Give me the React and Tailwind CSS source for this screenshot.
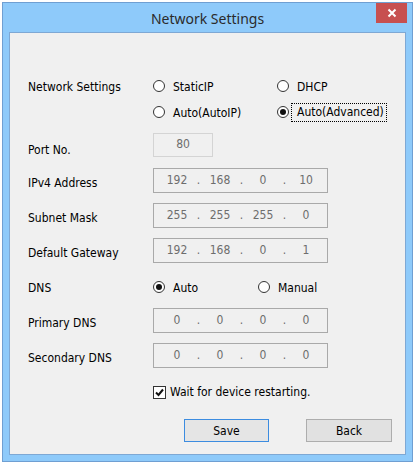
import React from 'react';

const FONT = "font-['DejaVu_Sans_Condensed','DejaVu_Sans',sans-serif]";

function Radio({ checked, label, focus, className = '' }) {
  return (
    <div className={`flex items-center ${className}`}>
      <span className="w-[12px] h-[12px] rounded-full border border-[#333] bg-white flex items-center justify-center shrink-0">
        {checked && <span className="w-[6px] h-[6px] rounded-full bg-[#111]" />}
      </span>
      {focus ? (
        <span className="ml-[2px] border border-dotted border-black pl-[5px] pr-[2px] leading-[17px]">{label}</span>
      ) : (
        <span className="ml-[8px] pt-[1px]">{label}</span>
      )}
    </div>
  );
}

function IpBox({ parts }) {
  return (
    <div className="w-[175px] h-[25px] border border-[#a9a9a9] flex items-center pl-[4px] pb-[2px] text-[#6d6d6d]">
      {parts.map((p, i) => (
        <React.Fragment key={i}>
          <span className="w-[38px] text-center">{p}</span>
          {i < 3 && <span className="w-[5px] text-center">.</span>}
        </React.Fragment>
      ))}
    </div>
  );
}

function Row({ label, labelClass = 'pt-[4px]', className = '', children }) {
  return (
    <div className={`flex items-center ${className}`}>
      <div className={`w-[125px] ${labelClass}`}>{label}</div>
      {children}
    </div>
  );
}

export default function App() {
  return (
    <div className="w-[416px] h-[465px] bg-white pt-[2px] pl-[2px]">
      <div className="w-[411px] h-[460px] border border-[#6f9fd2] bg-[#8ecafa] flex flex-col px-[6px] pb-[6px]">
        <div className="relative h-[29px] flex items-center justify-center shrink-0">
          <span className="font-['Noto_Sans',sans-serif] text-[14px] text-[#2b2b2b] pt-[1px]">Network Settings</span>
          <div className="absolute top-0 right-[-1px] w-[31px] h-[20px] bg-[#c75050] flex items-center justify-center">
            <svg width="10" height="10" viewBox="0 0 10 10">
              <path d="M1.5 1.5 L8.5 8.5 M8.5 1.5 L1.5 8.5" stroke="white" strokeWidth="2" />
            </svg>
          </div>
        </div>
        <div className={`flex-1 border border-[#7ea8d4] bg-[#f0f0f0] pl-[18px] pt-[43px] text-[12px] text-black ${FONT}`}>
          <Row label="Network Settings" labelClass="pt-[1px]" className="h-[20px]">
            <Radio label="StaticIP" className="w-[124px]" />
            <Radio label="DHCP" />
          </Row>
          <Row label="" labelClass="" className="h-[20px] mt-[6px]">
            <Radio label="Auto(AutoIP)" className="w-[124px]" />
            <Radio label="Auto(Advanced)" checked focus />
          </Row>
          <Row label="Port No." labelClass="pt-[10px]" className="h-[24px] mt-[11px]">
            <div className="w-[60px] h-[24px] border border-[#d4d4d4] flex items-center justify-center pb-[3px] text-[#6d6d6d]">80</div>
          </Row>
          <Row label="IPv4 Address" className="h-[25px] mt-[11px]">
            <IpBox parts={['192', '168', '0', '10']} />
          </Row>
          <Row label="Subnet Mask" className="h-[25px] mt-[10px]">
            <IpBox parts={['255', '255', '255', '0']} />
          </Row>
          <Row label="Default Gateway" className="h-[25px] mt-[10px]">
            <IpBox parts={['192', '168', '0', '1']} />
          </Row>
          <Row label="DNS" labelClass="pt-[1px]" className="h-[20px] mt-[14px]">
            <Radio label="Auto" checked className="w-[105px]" />
            <Radio label="Manual" />
          </Row>
          <Row label="Primary DNS" className="h-[25px] mt-[11px]">
            <IpBox parts={['0', '0', '0', '0']} />
          </Row>
          <Row label="Secondary DNS" className="h-[25px] mt-[10px]">
            <IpBox parts={['0', '0', '0', '0']} />
          </Row>
          <div className="flex items-center h-[16px] mt-[16px] pl-[125px]">
            <span className="w-[13px] h-[13px] border border-[#333] bg-white flex items-center justify-center shrink-0">
              <svg width="9" height="9" viewBox="0 0 9 9">
                <path d="M1 4.5 L3.5 7 L8 1.5" stroke="#111" strokeWidth="2" fill="none" />
              </svg>
            </span>
            <span className="ml-[4px] text-[12px]">Wait for device restarting.</span>
          </div>
          <div className="flex justify-end gap-[37px] pr-[13px] mt-[19px]">
            <button className="w-[85px] h-[23px] border border-[#3c8ce0] bg-[#e5e5e5] flex items-center justify-center">Save</button>
            <button className="w-[86px] h-[23px] border border-[#adadad] bg-[#e1e1e1] flex items-center justify-center">Back</button>
          </div>
        </div>
      </div>
    </div>
  );
}
